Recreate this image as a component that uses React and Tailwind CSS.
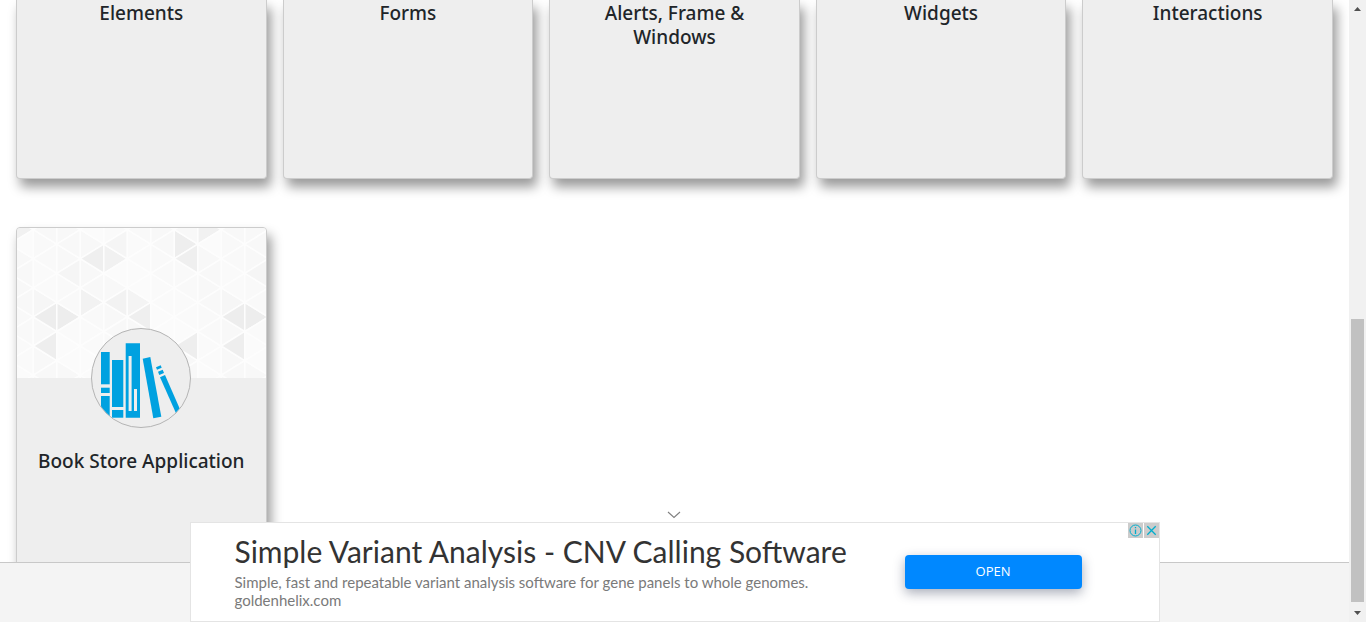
import React from "react";

const COL = 23.5;
const SIDE = 29.1;

const vertexY = (k, n) => (Math.abs(k) % 2 === 0 ? 1.6 : 16.2) + n * SIDE;

/* Accent shades keyed by direction, column and row; the motif repeats every eight columns. */
const ACCENTS = {
  "R:6:0": "#eeeeee",
  "L:6:1": "#efefef",
  "R:7:-1": "#f1f1f1",
  "L:2:1": "#efefef",
  "R:3:0": "#f1f1f1",
  "L:3:0": "#f5f5f5",
  "L:1:1": "#f5f5f5",
  "R:0:2": "#f6f6f6",
  "L:0:3": "#ededed",
  "R:1:2": "#ededed",
  "L:0:4": "#eeeeee",
  "R:2:2": "#f2f2f2",
  "L:3:2": "#f2f2f2",
  "R:4:2": "#f4f4f4",
  "L:4:3": "#efefef",
  "L:6:4": "#eeeeee",
  "R:1:0": "#f8f8f8",
};
const PLAIN = ["#f8f8f8", "#fafafa", "#f8f8f8", "#fbfbfb", "#f9f9f9"];

function TrianglePattern() {
  const shapes = [];
  for (let k = -1; k < 11; k++) {
    const x0 = 16.3 + k * COL;
    const x1 = x0 + COL;
    const m = (k + 8) % 8;
    for (let n = -1; n < 6; n++) {
      const y = vertexY(k, n);
      const fill = (dir) =>
        ACCENTS[`${dir}:${m}:${n}`] ||
        PLAIN[(m * 3 + (n + 1) * 7 + (dir === "R" ? 2 : 0)) % PLAIN.length];
      shapes.push(
        <polygon
          key={`R${k}:${n}`}
          points={`${x0},${y} ${x0},${y + SIDE} ${x1},${y + SIDE / 2}`}
          fill={fill("R")}
        />,
        <polygon
          key={`L${k}:${n}`}
          points={`${x0},${y} ${x1},${y - SIDE / 2} ${x1},${y + SIDE / 2}`}
          fill={fill("L")}
        />
      );
    }
  }
  return (
    <svg
      aria-hidden="true"
      className="block h-full w-full"
      viewBox="0 0 249 150"
      preserveAspectRatio="xMinYMin slice"
      stroke="#fdfdfd"
      strokeWidth="1.5"
    >
      {shapes}
    </svg>
  );
}

function BooksIcon() {
  return (
    <svg aria-hidden="true" viewBox="0 0 98 98" className="h-full w-full" fill="#00a1e0">
      <rect x="9" y="23" width="8.7" height="32.3" />
      <rect x="9" y="58.7" width="8.7" height="5.3" />
      <rect x="9" y="67" width="8.7" height="24" />
      <rect x="20" y="31" width="11.3" height="47" />
      <rect x="20" y="81" width="11.3" height="7.7" />
      <path fillRule="evenodd" d="M33.7 14.3H48V88.7H33.7ZM36.6 27V82H39.6V27ZM42 60V82H45V60Z" />
      <polygon points="50.7,29.7 58.3,28 69.3,87.7 61.3,89.3" />
      <polygon points="64,38.3 68.7,36.3 69.7,38.7 65,40.7" />
      <polygon points="66,42.7 70.7,40.7 72,44 67.3,46" />
      <polygon points="68,48.3 73,46 88,80.3 84,84.3" />
    </svg>
  );
}

function CategoryCard({ title }) {
  return (
    <div className="h-[179px] rounded-b border border-t-0 border-[#cccccc] bg-[#eeeeee] px-5 pt-px text-center shadow-[4px_8px_12px_rgba(0,0,0,0.4)]">
      <h5 className="text-[19px] leading-6 font-medium">{title}</h5>
    </div>
  );
}

function BookStoreCard() {
  return (
    <div className="h-[380px] rounded border border-[#cccccc] bg-[#eeeeee] shadow-[4px_8px_12px_rgba(0,0,0,0.4)]">
      <div className="h-[150px] overflow-hidden rounded-t-[3px]">
        <TrianglePattern />
      </div>
      <div className="relative mx-auto -mt-[50px] size-[100px] overflow-hidden rounded-full border border-[#b4b4b4] bg-[#eeeeee]">
        <BooksIcon />
      </div>
      <h5 className="mt-[21px] text-center text-[19px] leading-6 font-medium whitespace-nowrap">
        Book Store Application
      </h5>
    </div>
  );
}

function AdBanner() {
  return (
    <aside className="absolute bottom-0 left-1/2 w-[970px] max-w-full -translate-x-1/2">
      <div className="flex justify-center pr-0.5">
        <button type="button" aria-label="Collapse" className="px-2 pt-1 pb-[3px]">
          <svg aria-hidden="true" width="14" height="8" viewBox="0 0 14 8" fill="none" stroke="#808080" strokeWidth="1.1">
            <path d="M1 1L7 6.5L13 1" />
          </svg>
        </button>
      </div>
      <div className="relative flex h-[100px] items-center justify-between border border-[#e4e4e4] bg-white pr-[77px] pl-11">
        <div className="pb-0.5 font-['Lato',sans-serif] text-[#333]">
          <a href="#ad" className="block text-3xl leading-9">
            Simple Variant Analysis - CNV Calling Software
          </a>
          <p className="mt-1 text-[15px] leading-[18px] text-[#7a7a7a]">
            Simple, fast and repeatable variant analysis software for gene panels to whole genomes.
          </p>
          <a href="#goldenhelix" className="block text-[15px] leading-[18px] text-[#7a7a7a]">
            goldenhelix.com
          </a>
        </div>
        <button
          type="button"
          className="h-[34px] w-[177px] rounded bg-[#0088ff] font-['Open_Sans',sans-serif] text-[13px] text-white shadow-[0_4px_12px_rgba(40,50,80,0.4)]"
        >
          OPEN
        </button>
        <div className="absolute top-0 right-0 flex gap-px">
          <button type="button" aria-label="Ad information" className="size-[15px] bg-[#cccccc]">
            <svg aria-hidden="true" viewBox="0 0 15 15" fill="none" stroke="#00aecd">
              <circle cx="7.5" cy="7.5" r="5.5" />
              <path d="M7.5 6.5V11M7.5 4V5.3" strokeWidth="1.3" />
            </svg>
          </button>
          <button type="button" aria-label="Close ad" className="size-[15px] bg-[#cccccc]">
            <svg aria-hidden="true" viewBox="0 0 15 15" fill="none" stroke="#00aecd" strokeWidth="1.3">
              <path d="M3.3 3.3L11.7 11.7M11.7 3.3L3.3 11.7" />
            </svg>
          </button>
        </div>
      </div>
    </aside>
  );
}

function Scrollbar() {
  return (
    <div aria-hidden="true" className="flex w-[17px] shrink-0 flex-col bg-[#f1f1f1]">
      <svg className="size-[17px]" viewBox="0 0 17 17" fill="#505050">
        <path d="M5 11L8.5 7L12 11Z" />
      </svg>
      <div className="flex flex-1 flex-col px-0.5 pb-[3px]">
        <div className="flex-[302]" />
        <div className="flex-[283] bg-[#c1c1c1]" />
      </div>
      <svg className="size-[17px]" viewBox="0 0 17 17" fill="#505050">
        <path d="M5 6L8.5 10L12 6Z" />
      </svg>
    </div>
  );
}

const CATEGORIES = ["Elements", "Forms", "Alerts, Frame & Windows", "Widgets", "Interactions"];

export default function App() {
  return (
    <div className="flex h-screen overflow-hidden bg-white font-['Noto_Sans',sans-serif] text-[#212529]">
      <div className="relative flex min-w-0 flex-1 flex-col overflow-hidden">
        <main className="min-h-0 flex-1 overflow-hidden px-4">
          <div className="grid grid-cols-5 gap-x-4 gap-y-12">
            {CATEGORIES.map((title) => (
              <CategoryCard key={title} title={title} />
            ))}
            <BookStoreCard />
          </div>
        </main>
        <footer className="h-[60px] shrink-0 border-t border-[#c8c8c8] bg-[#f4f4f4]" />
        <AdBanner />
      </div>
      <Scrollbar />
    </div>
  );
}
